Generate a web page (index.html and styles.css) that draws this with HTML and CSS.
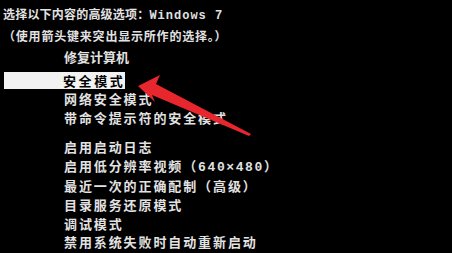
FILE: index.html
```html
<!DOCTYPE html>
<html lang="zh-CN">
<head>
    <meta charset="UTF-8">
    <title>高级启动选项</title>
    <link rel="stylesheet" href="styles.css">
</head>
<body>
    <!-- Advanced boot options -->
    <div class="screen">
        <div class="header">
            <p class="title">选择以下内容的高级选项：<span class="latin">Windows 7</span></p>
            <p class="hint">（使用箭头键来突出显示所作的选择。）</p>
        </div>

        <ul class="menu">
            <li class="item repair">修复计算机</li>
            <li class="item selected"><span>安全模式</span></li>
            <li class="item">网络安全模式</li>
            <li class="item">带命令提示符的安全模式</li>
            <li class="item group">启用启动日志</li>
            <li class="item">启用低分辨率视频（<span class="latin">640×480</span>）</li>
            <li class="item">最近一次的正确配制（高级）</li>
            <li class="item">目录服务还原模式</li>
            <li class="item">调试模式</li>
            <li class="item">禁用系统失败时自动重新启动</li>
            <li class="item">禁用驱动程序签名强制</li>
        </ul>

        <!-- red annotation arrow pointing at the selected entry -->
        <svg class="arrow" width="452" height="253" viewBox="0 0 452 253">
            <polygon points="138,86 160,75 156,84 251,134 249,136 152,95 155,102" fill="#e8262d"/>
        </svg>
    </div>
</body>
</html>
```

FILE: styles.css
```css
body {
    margin: 0;
    background-color: #000;
    color: #e2e2e2;
    font-family: "Noto Sans CJK SC", "Noto Sans", sans-serif;
    font-weight: bold;
    height: 253px;
    overflow: hidden;
}

.screen {
    position: relative;
    height: 253px;
}

.header {
    padding: 4px 0 0 3px;
}

.header p {
    margin: 0;
    font-size: 12px;
    line-height: 20px;
    letter-spacing: 0.2px;
    white-space: nowrap;
}

.header .hint {
    letter-spacing: 0.8px;
}

.latin {
    font-family: "Liberation Mono", monospace;
    letter-spacing: 1.6px;
}

.title .latin {
    letter-spacing: 1px;
}

.menu {
    list-style: none;
    margin: 0;
    padding: 1px 0 0 0;
}

.item {
    padding-left: 64px;
    font-size: 13px;
    line-height: 18.6px;
    letter-spacing: 1.9px;
    white-space: nowrap;
}

.item.repair {
    letter-spacing: 0;
    line-height: 20px;
}

.item.selected {
    margin: 5px 0 1px 4px;
    padding-left: 59px;
    width: 62px;
    background-color: #f2f2f2;
    color: #000;
    line-height: 17px;
    letter-spacing: 2.6px;
}

.item.group {
    margin-top: 11px;
}

.arrow {
    position: absolute;
    left: 0;
    top: 0;
    filter: blur(0.6px);
}
```
